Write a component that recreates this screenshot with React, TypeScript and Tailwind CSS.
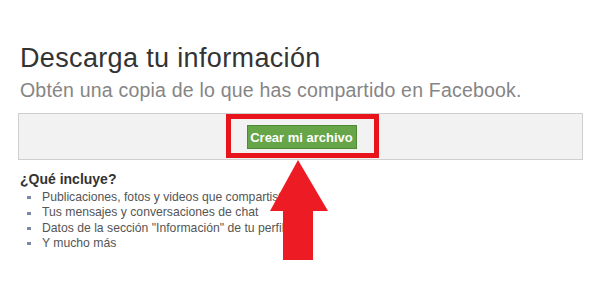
import React from 'react';

const items = [
  'Publicaciones, fotos y videos que compartiste',
  'Tus mensajes y conversaciones de chat',
  'Datos de la sección "Información" de tu perfil',
  'Y mucho más',
];

const UpArrow: React.FC = () => (
  <svg className="absolute left-[270px] top-[160px]" width="58" height="100" viewBox="0 0 58 100" aria-hidden="true">
    <polygon points="28,0 58,51 43,51 43,100 13,100 13,51 0,51" fill="#ed1c24" />
  </svg>
);

export default function App() {
  return (
    <div className="relative w-[600px] h-[293px] bg-white overflow-hidden font-['Liberation_Sans',Arial,sans-serif]">
      <div className="pt-[43px] pl-[20px]">
        <h1 className="text-[27px] leading-[31px] tracking-[0.35px] text-[#333]">Descarga tu información</h1>
        <p className="text-[19.5px] leading-[24px] tracking-[0.2px] text-[#858585] mt-[4px]">
          Obtén una copia de lo que has compartido en Facebook.
        </p>
      </div>

      <div className="ml-[18px] mt-[11px] w-[565px] h-[47px] border border-[#cfcfcf] bg-[#f2f2f2] flex items-center justify-center">
        <div className="relative ml-[2px] mt-[1px]">
          <button className="h-[24px] w-[110px] bg-[#66a548] border border-[#4e8a36] text-white text-[13px] font-bold leading-none">
            Crear mi archivo
          </button>
          <div className="absolute left-[-21px] right-[-22px] top-[-11px] bottom-[-9px] border-[5px] border-[#e8141c]" />
        </div>
      </div>

      <div className="pl-[20px] mt-[11px]">
        <h3 className="text-[14px] leading-[17px] font-bold text-[#333]">¿Qué incluye?</h3>
        <ul className="mt-[2px]">
          {items.map(item => (
            <li key={item} className="flex items-center text-[12.2px] leading-[15.4px] text-[#555]">
              <span className="ml-[7px] mr-[11px] w-[4px] h-[3px] bg-[#7a8aa6]" />
              {item}
            </li>
          ))}
        </ul>
      </div>

      <UpArrow />
    </div>
  );
}
